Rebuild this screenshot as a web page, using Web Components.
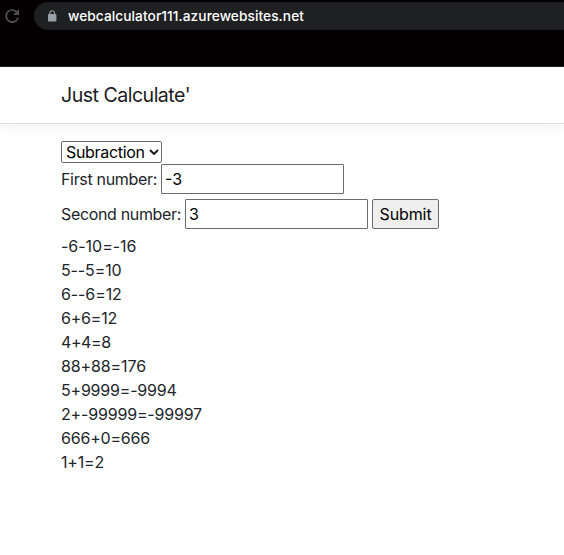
<!DOCTYPE html>
<html lang="en">
<head>
<meta charset="utf-8">
<title>Just Calculate'</title>
<style>
html,body{margin:0;height:100%;background:#fff;overflow:hidden}
body{font-family:Inter,"Liberation Sans",sans-serif;font-size:16px;line-height:24px;color:#212529}
</style>
</head>
<body>
<calc-page></calc-page>
<script>
// Sets one line of text to a given advance width through letter spacing.
class FitText extends HTMLElement{
  connectedCallback(){
    const r=this.attachShadow({mode:'open'});
    r.innerHTML='<style>:host{display:inline-block;white-space:pre;flex:none}span{display:inline-block}</style><span></span>';
    const s=r.querySelector('span');
    s.textContent=this.getAttribute('text');
    const w=+this.getAttribute('w');
    s.style.letterSpacing=((w-s.getBoundingClientRect().width)/s.textContent.length)+'px';
  }
}
customElements.define('fit-text',FitText);

class BrowserBar extends HTMLElement{
  connectedCallback(){
    this.attachShadow({mode:'open'}).innerHTML=`<style>
    :host{display:flex;box-sizing:border-box;height:67px;background:#040001;border-bottom:1px solid #231f23;padding:2px 0 0 4px;gap:14px;align-items:flex-start}
    .reload{width:16px;height:28px;flex:none}
    .url{display:flex;align-items:center;flex:1;height:28px;background:#1f2022;border-radius:14px 0 0 14px;padding-left:13px;box-sizing:border-box;color:#fff;font-size:13.7px;font-weight:500}
    .lock{width:10px;height:12px;margin-right:11px;margin-top:-1px}
    </style>
    <svg class="reload" viewBox="0 0 16 28" fill="none" stroke="#515151" stroke-width="1.7"><path d="M13.5 11.2A6 6 0 1 0 14 15.6"/><path d="M15 7v6H9z" fill="#515151" stroke="none"/></svg>
    <div class="url"><svg class="lock" viewBox="0 0 10 12"><rect x="1" y="4" width="8.4" height="7.6" rx="1" fill="#9aa0a8"/><path d="M2.9 4.5V3a2.3 2.3 0 0 1 4.6 0v1.5" fill="none" stroke="#9aa0a8" stroke-width="1.1"/></svg><fit-text text="webcalculator111.azurewebsites.net" w="236"></fit-text></div>`;
  }
}
customElements.define('browser-bar',BrowserBar);

class NavBar extends HTMLElement{
  connectedCallback(){
    this.attachShadow({mode:'open'}).innerHTML=`<style>
    :host{display:flex;align-items:center;box-sizing:border-box;height:57px;padding-left:61px;background:#fff;border-bottom:1px solid #dcdcdc;box-shadow:0 4px 12px rgba(0,0,0,.055);font-size:19.6px;color:#1b1c1e}
    </style><fit-text text="Just Calculate'" w="129"></fit-text>`;
  }
}
customElements.define('nav-bar',NavBar);

class OperationSelect extends HTMLElement{
  connectedCallback(){
    this.attachShadow({mode:'open'}).innerHTML=`<style>
    :host{display:grid;width:101px;height:22px}
    select,svg{grid-area:1/1}
    select{appearance:none;box-sizing:border-box;width:101px;height:22px;margin:0;border:1px solid #6b6b6b;border-radius:2px;background:#fff;padding:1px 0 0 4px;font:16px/19px Inter,"Liberation Sans",sans-serif;color:#000;letter-spacing:-.32px}
    svg{width:10px;height:8px;justify-self:end;align-self:center;margin-right:3px;pointer-events:none}
    </style><select><option>Subraction</option></select><svg viewBox="0 0 10 8"><path d="M1 2l4 4 4-4" fill="none" stroke="#111" stroke-width="1.9"/></svg>`;
  }
}
customElements.define('operation-select',OperationSelect);

class NumberField extends HTMLElement{
  connectedCallback(){
    this.attachShadow({mode:'open'}).innerHTML=`<style>
    :host{display:flex;align-items:center;gap:4px;height:30px}
    input{box-sizing:border-box;width:183px;height:30px;margin:0;border:1px solid #6b6b6b;border-radius:1px;background:#fff;padding:1px 3px;font:16px Inter,"Liberation Sans",sans-serif;color:#000;outline:0}
    </style><fit-text text="${this.getAttribute('label')}" w="${this.getAttribute('w')}"></fit-text><input value="${this.getAttribute('value')}">`;
  }
}
customElements.define('number-field',NumberField);

class SubmitButton extends HTMLElement{
  connectedCallback(){
    this.attachShadow({mode:'open'}).innerHTML=`<style>
    :host{display:block}
    button{box-sizing:border-box;display:block;width:67px;height:30px;margin:0;padding:0;border:1px solid #6b6b6b;border-radius:2px;background:#efefef;font:16px Inter,"Liberation Sans",sans-serif;color:#000}
    </style><button><fit-text text="Submit" w="52"></fit-text></button>`;
  }
}
customElements.define('submit-button',SubmitButton);

class ResultList extends HTMLElement{
  connectedCallback(){
    const rows=[['-6-10=-16',75.5],['5--5=10',60.5],['6--6=12',60.8],['6+6=12',56],['4+4=8',49.7],['88+88=176',85],['5+9999=-9994',115.6],['2+-99999=-99997',141],['666+0=666',89],['1+1=2',43]];
    this.attachShadow({mode:'open'}).innerHTML=`<style>:host{display:block}div{height:24px;display:flex}</style>`+
      rows.map(([t,w])=>`<div><fit-text text="${t}" w="${w}"></fit-text></div>`).join('');
  }
}
customElements.define('result-list',ResultList);

class CalcPage extends HTMLElement{
  connectedCallback(){
    this.attachShadow({mode:'open'}).innerHTML=`<style>
    :host{display:block}
    main{padding:17px 0 0 61px}
    .first{margin-top:1px}
    .second{display:flex;gap:4px;margin:5px 0}
    </style>
    <browser-bar></browser-bar><nav-bar></nav-bar>
    <main><operation-select></operation-select>
    <number-field class="first" label="First number:" value="-3" w="96"></number-field>
    <div class="second"><number-field label="Second number:" value="3" w="120"></number-field><submit-button></submit-button></div>
    <result-list></result-list></main>`;
  }
}
customElements.define('calc-page',CalcPage);
</script>
</body>
</html>
